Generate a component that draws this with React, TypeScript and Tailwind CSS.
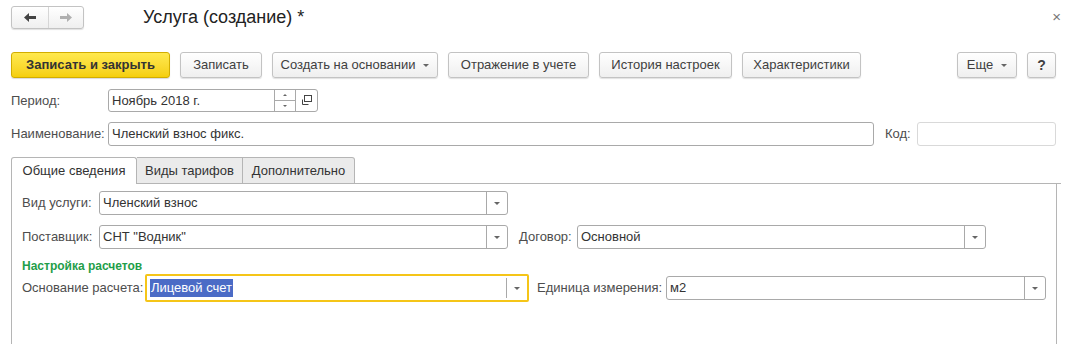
import type { ReactNode } from 'react';

const btn =
  'h-[26px] flex items-center justify-center rounded-[3px] border border-[#c3c3c3] bg-gradient-to-b from-white to-[#efefef] shadow-[0_1px_1px_rgba(0,0,0,0.12)] text-[#404040] text-[13px]';

function Caret() {
  return <span className="inline-block w-0 h-0 border-l-[3px] border-r-[3px] border-t-[3px] border-l-transparent border-r-transparent border-t-[#666]" />;
}

function Button({ w, children, caret }: { w: string; children: ReactNode; caret?: boolean }) {
  return (
    <div className={`${btn} ${w} gap-[8px]`}>
      <span>{children}</span>
      {caret && <Caret />}
    </div>
  );
}

function Field({ w, value, dropdown, muted }: { w: string; value?: string; dropdown?: boolean; muted?: boolean }) {
  return (
    <div
      className={`${w} h-[24px] flex rounded-[3px] border ${muted ? 'border-[#d9d9d9]' : 'border-[#a9a9a9]'} bg-white`}
    >
      <div className="flex-1 flex items-center px-[3px] text-[#333] text-[13px] whitespace-nowrap overflow-hidden">{value}</div>
      {dropdown && (
        <div className="w-[21px] border-l border-[#a9a9a9] flex items-center justify-center">
          <Caret />
        </div>
      )}
    </div>
  );
}

export default function App() {
  return (
    <div className="w-[1072px] h-[344px] bg-white overflow-hidden relative font-['Liberation_Sans',Arial,sans-serif] text-[13px] text-[#4d4d4d]">
      {/* header */}
      <div className="flex items-center pt-[6px] pl-[11px] h-[29px]">
        <div className="w-[73px] h-[23px] flex rounded-[3px] border border-[#c3c3c3] bg-gradient-to-b from-white to-[#efefef] shadow-[0_1px_1px_rgba(0,0,0,0.12)]">
          <div className="w-[37px] flex items-center justify-center border-r border-[#d6d6d6]">
            <svg width="12" height="9" viewBox="0 0 12 9">
              <path d="M0 4.5 L5 0 V3 H12 V6 H5 V9 Z" fill="#444" />
            </svg>
          </div>
          <div className="flex-1 flex items-center justify-center">
            <svg width="12" height="9" viewBox="0 0 12 9">
              <path d="M12 4.5 L7 0 V3 H0 V6 H7 V9 Z" fill="#b0b0b0" />
            </svg>
          </div>
        </div>
        <div className="ml-[59px] text-[18px] text-[#222]">Услуга (создание) *</div>
      </div>
      <div className="absolute top-[6px] right-[11px] text-[#777] text-[15px]">×</div>

      {/* toolbar */}
      <div className="flex items-center mt-[23px] pl-[11px] pr-[16px] gap-[10px]">
        <div className="w-[159px] h-[26px] flex items-center justify-center rounded-[3px] border border-[#d2ad00] bg-gradient-to-b from-[#ffe94d] to-[#f5cf07] shadow-[0_1px_1px_rgba(0,0,0,0.15)] font-bold text-[#333]">
          Записать и закрыть
        </div>
        <Button w="w-[82px]">Записать</Button>
        <Button w="w-[166px]" caret>
          Создать на основании
        </Button>
        <Button w="w-[141px]">Отражение в учете</Button>
        <Button w="w-[133px]">История настроек</Button>
        <Button w="w-[119px]">Характеристики</Button>
        <div className="flex-1" />
        <Button w="w-[60px]" caret>
          Еще
        </Button>
        <div className={`${btn} w-[29px] font-bold text-[#333] text-[14px]`}>?</div>
      </div>

      {/* period */}
      <div className="flex items-center mt-[11px] px-[11px] h-[23px]">
        <div className="w-[97px]">Период:</div>
        <div className="w-[210px] h-[23px] flex rounded-[3px] border border-[#a9a9a9]">
          <div className="flex-1 flex items-center px-[3px] text-[#333]">Ноябрь 2018 г.</div>
          <div className="w-[21px] flex flex-col border-l border-[#a9a9a9]">
            <div className="flex-1 flex items-center justify-center border-b border-[#a9a9a9]">
              <span className="inline-block w-0 h-0 border-l-[2px] border-r-[2px] border-b-[2px] border-l-transparent border-r-transparent border-b-[#666]" />
            </div>
            <div className="flex-1 flex items-center justify-center">
              <span className="inline-block w-0 h-0 border-l-[2px] border-r-[2px] border-t-[2px] border-l-transparent border-r-transparent border-t-[#666]" />
            </div>
          </div>
          <div className="w-[22px] border-l border-[#a9a9a9] flex items-center justify-center">
            <svg width="11" height="11" viewBox="0 0 11 11" fill="none" stroke="#444" strokeWidth="1">
              <rect x="3.5" y="0.5" width="7" height="6" />
              <path d="M1.5 4.5 V9.5 H7.5" />
            </svg>
          </div>
        </div>
      </div>

      {/* name */}
      <div className="flex items-center mt-[10px] px-[11px]">
        <div className="w-[97px] whitespace-nowrap">Наименование:</div>
        <Field w="w-[766px]" value="Членский взнос фикс." />
        <div className="ml-[11px] w-[32px]">Код:</div>
        <Field w="w-[139px]" muted />
      </div>

      {/* tabs */}
      <div className="flex mt-[11px] px-[11px] h-[27px] items-end">
        <div className="w-[126px] h-[27px] flex items-center justify-center rounded-t-[3px] border border-b-0 border-[#b5b5b5] bg-white text-[#333] relative z-10">
          Общие сведения
        </div>
        <div className="w-[106px] h-[27px] flex items-center justify-center border-t border-r border-b border-[#b5b5b5] bg-[#ebebeb] text-[#333]">
          Виды тарифов
        </div>
        <div className="w-[112px] h-[27px] flex items-center justify-center rounded-tr-[3px] border-t border-r border-b border-[#b5b5b5] bg-[#ebebeb] text-[#333]">
          Дополнительно
        </div>
        <div className="flex-1 h-[27px] border-b border-[#b5b5b5]" />
      </div>

      {/* panel */}
      <div className="mx-[11px] w-[1046px] h-[200px] border-l border-r border-[#b5b5b5] -mt-[1px] px-[10px] pt-[8px]">
        <div className="flex items-center">
          <div className="w-[77px] whitespace-nowrap">Вид услуги:</div>
          <Field w="w-[409px]" value="Членский взнос" dropdown />
        </div>
        <div className="flex items-center mt-[10px]">
          <div className="w-[77px] whitespace-nowrap">Поставщик:</div>
          <Field w="w-[409px]" value={'СНТ "Водник"'} dropdown />
          <div className="ml-[11px] w-[58px]">Договор:</div>
          <Field w="w-[409px]" value="Основной" dropdown />
        </div>
        <div className="mt-[10px] text-[#1f9e4a] font-bold text-[12px] leading-[14px]">Настройка расчетов</div>
        <div className="flex items-center mt-[1px]">
          <div className="w-[123px] whitespace-nowrap">Основание расчета:</div>
          <div className="w-[384px] h-[28px] flex rounded-[2px] border-2 border-[#f5c518] bg-white">
            <div className="flex-1 flex items-center px-[3px]">
              <span className="bg-[#4b6bc6] text-white leading-[18px] px-[1px]">Лицевой счет</span>
            </div>
            <div className="w-[21px] my-[2px] border-l border-[#a9a9a9] flex items-center justify-center">
              <Caret />
            </div>
          </div>
          <div className="ml-[8px] w-[129px] whitespace-nowrap">Единица измерения:</div>
          <Field w="w-[380px]" value="м2" dropdown />
        </div>
      </div>
    </div>
  );
}
